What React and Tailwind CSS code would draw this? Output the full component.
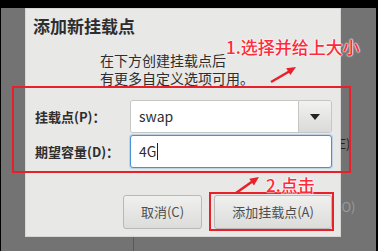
import React from "react";

const cjk = { fontFamily: '"Noto Sans CJK SC", "Noto Sans", sans-serif' };

export default function App() {
  return (
    <div className="relative w-[378px] h-[251px] bg-black pt-px pl-px pr-[2px] pb-[3px] overflow-hidden" style={cjk}>
      <div className="relative h-full bg-[#737373]">
        {/* background window bits */}
        <div className="absolute left-[132px] top-0 bottom-0 w-px bg-[#5a5a5a]" />
        <div className="absolute left-[333px] top-[128px] text-[13px] leading-[16px] text-[#222]">(E)</div>
        <div className="absolute left-[330px] top-[191px] text-[13px] leading-[16px] text-[#9a9a9a]">s(O)</div>

        {/* dialog */}
        <div className="relative z-10 ml-[24px] mt-[7px] w-[316px] h-[229px] bg-[#e8e8e7] border border-[#d6d6d5] flex flex-col">
          <div className="pt-[6px] pl-[7px] text-[17px] leading-[22px] font-bold text-[#2e2e2e]">添加新挂载点</div>
          <div className="ml-[74px] mt-[14px] text-[14px] leading-[18px] text-[#2e2e2e]">
            <div className="h-[18px]">在下方创建挂载点后</div>
            <div className="h-[18px]">有更多自定义选项可用。</div>
          </div>
          <div className="mt-[13px] grid grid-cols-[95px_202px] gap-y-[2px] pl-[9px]">
            <div className="h-[33px] flex items-center text-[13px] font-bold text-[#2e2e2e]">挂载点(P)：</div>
            <div className="h-[33px] flex rounded-[3px] border border-[#c6c6c5] overflow-hidden">
              <div className="flex-1 bg-white flex items-center pl-[8px] text-[14px] text-[#2e2e2e]">swap</div>
              <div className="w-[33px] border-l border-[#c6c6c5] bg-gradient-to-b from-[#f2f2f1] to-[#dadad9] flex items-center justify-center">
                <svg width="10" height="6" viewBox="0 0 10 6"><path d="M0 0H10L5 6Z" fill="#222" /></svg>
              </div>
            </div>
            <div className="h-[33px] flex items-center text-[13px] font-bold text-[#2e2e2e]">期望容量(D)：</div>
            <div className="h-[33px] flex items-center rounded-[3px] border border-[#4a90d9] bg-white pl-[8px] text-[14px] text-[#2e2e2e] shadow-[0_0_0_1px_rgba(74,144,217,0.25)]">
              <span>4G</span>
              <span className="ml-px w-px h-[17px] bg-[#222]" />
            </div>
          </div>
          <div className="mt-[27px] flex pl-[97px] gap-[12px]">
            <div className="w-[79px] h-[34px] rounded-[3px] border border-[#b9b9b8] bg-gradient-to-b from-[#f0f0ef] to-[#dcdcdb] flex items-center justify-center text-[13px] text-[#4e4e4e]">取消(C)</div>
            <div className="w-[118px] h-[34px] rounded-[3px] border border-[#b9b9b8] bg-gradient-to-b from-[#f0f0ef] to-[#dcdcdb] flex items-center justify-center text-[13px] text-[#4e4e4e]">添加挂载点(A)</div>
          </div>
        </div>
      </div>

      {/* annotations */}
      <div className="absolute left-[12px] top-[86px] w-[339px] h-[87px] border-2 border-[#e8202a] z-20" />
      <div className="absolute left-[209px] top-[192px] w-[125px] h-[39px] border-2 border-[#e8202a] z-20" />
      <div className="absolute z-30 left-[226px] top-[36px] text-[17px] leading-[22px] font-medium text-[#ff2a3c] [text-shadow:0_0_2px_#fff,0_0_2px_#fff,0_0_1px_#fff]">1.选择并给上大小</div>
      <div className="absolute z-30 left-[266px] top-[174px] text-[17px] leading-[22px] font-medium text-[#ff2a3c] [text-shadow:0_0_2px_#fff,0_0_2px_#fff,0_0_1px_#fff]">2.点击</div>
      <svg className="absolute inset-0 z-30 pointer-events-none" width="378" height="251">
        <line x1="271" y1="82" x2="290" y2="71" stroke="#e8202a" strokeWidth="2.5" />
        <polygon points="296,67 290.4,75 286.2,68.2" fill="#e8202a" />
        <line x1="236" y1="193" x2="253" y2="181" stroke="#e8202a" strokeWidth="2.5" />
        <polygon points="259,177 253.9,185.4 249.3,178.8" fill="#e8202a" />
      </svg>
    </div>
  );
}
